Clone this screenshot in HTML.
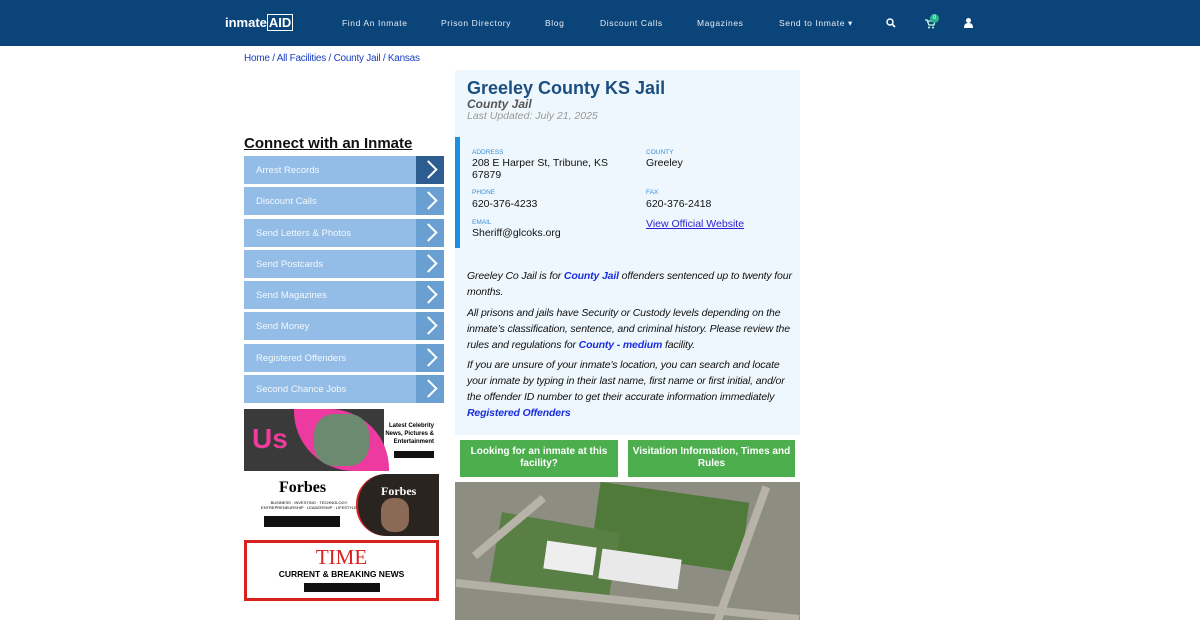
<!DOCTYPE html>
<html><head><meta charset="utf-8"><style>
*{margin:0;padding:0;box-sizing:border-box}
body{width:1200px;height:620px;overflow:hidden;background:#fff;font-family:"Liberation Sans",sans-serif;position:relative}
.nav{position:absolute;left:0;top:0;width:1200px;height:46px;background:#0b4479}
.nav span{position:absolute;top:18px;color:#e4ecf4;font-size:8.5px;letter-spacing:.6px}
.logo{position:absolute;left:225px;top:15px;color:#fff;font-weight:bold;font-size:13px}
.bc{position:absolute;left:244px;top:53px;font-size:10px;color:#1a3fc4;letter-spacing:-0.25px}
.ch{position:absolute;left:244px;top:135px;font-size:15px;font-weight:bold;text-decoration:underline;color:#111}
.btn{position:absolute;left:244px;width:200px;height:28px;background:#93bde6;color:#f4f8fc;font-size:9.5px;padding:9px 0 0 12px}
.btn i{position:absolute;right:0;top:0;width:28px;height:28px;background:#6a9fd2}
.btn i:after{content:"";position:absolute;left:6px;top:7px;width:11px;height:11px;border-right:2px solid #fff;border-top:2px solid #fff;transform:rotate(45deg)}
.panel{position:absolute;left:455px;top:70px;width:345px;height:365px;background:#eef7fd}
.lbl{position:absolute;font-size:6.5px;color:#3a8ed8}
.val{position:absolute;font-size:10.5px;color:#111;line-height:12px}
.p{position:absolute;left:12px;width:326px;font-size:10.5px;font-style:italic;line-height:16px;color:#111;letter-spacing:-0.15px}
.p b{color:#1a2ee0}
.g{position:absolute;top:440px;height:37px;background:#4cae4c;color:#fff;font-weight:bold;font-size:10px;text-align:center;line-height:12px;padding-top:6px}
</style></head><body>
<div class="nav">
<div class="logo">inmate<span style="position:static;font-size:13px;color:#fff;letter-spacing:0;font-weight:bold;border:1px solid #fff;padding:0 1px">AID</span></div>
<span style="left:342px">Find An Inmate</span>
<span style="left:441px">Prison Directory</span>
<span style="left:545px">Blog</span>
<span style="left:600px">Discount Calls</span>
<span style="left:697px">Magazines</span>
<span style="left:779px">Send to Inmate ▾</span>
<svg style="position:absolute;left:886px;top:18px" width="10" height="10"><circle cx="4" cy="4" r="3" fill="none" stroke="#fff" stroke-width="1.5"/><line x1="6" y1="6" x2="9" y2="9" stroke="#fff" stroke-width="1.6"/></svg>
<svg style="position:absolute;left:925px;top:19px" width="10" height="10"><path d="M0 1h2l2 5h5l1-4H3" fill="none" stroke="#cfe" stroke-width="1.3"/><circle cx="4" cy="8.5" r="1" fill="#cfe"/><circle cx="8" cy="8.5" r="1" fill="#cfe"/></svg>
<div style="position:absolute;left:930px;top:14px;width:9px;height:9px;border-radius:50%;background:#2bb58f;color:#fff;font-size:6px;text-align:center;line-height:9px">0</div>
<svg style="position:absolute;left:964px;top:18px" width="9" height="10"><circle cx="4.5" cy="2.5" r="2.5" fill="#fff"/><path d="M0 10c0-4 2-5 4.5-5s4.5 1 4.5 5z" fill="#fff"/></svg>
</div>
<div class="bc">Home / All Facilities / County Jail / Kansas</div>
<div class="ch">Connect with an Inmate</div>
<div class="btn" style="top:156px">Arrest Records<i style="background:#2d5d90"></i></div>
<div class="btn" style="top:187px">Discount Calls<i></i></div>
<div class="btn" style="top:219px">Send Letters &amp; Photos<i></i></div>
<div class="btn" style="top:250px">Send Postcards<i></i></div>
<div class="btn" style="top:281px">Send Magazines<i></i></div>
<div class="btn" style="top:312px">Send Money<i></i></div>
<div class="btn" style="top:344px">Registered Offenders<i></i></div>
<div class="btn" style="top:375px">Second Chance Jobs<i></i></div>
<div style="position:absolute;left:244px;top:409px;width:195px;height:62px;background:#fff;overflow:hidden">
<div style="position:absolute;left:0;top:0;width:140px;height:62px;background:#3a3a3a"></div>
<div style="position:absolute;left:50px;top:0;width:95px;height:62px;background:#ec3aa0;border-radius:0 60px 0 60px"></div>
<div style="position:absolute;left:70px;top:5px;width:55px;height:52px;background:#6b8a70;border-radius:20px"></div>
<div style="position:absolute;left:8px;top:14px;color:#ef3b9c;font-weight:bold;font-size:28px">Us</div>
<div style="position:absolute;right:5px;top:13px;font-size:6px;font-weight:bold;text-align:right;line-height:8px">Latest Celebrity<br>News, Pictures &amp;<br>Entertainment</div>
<div style="position:absolute;left:150px;top:42px;width:40px;height:7px;background:#111"></div>
</div>
<div style="position:absolute;left:244px;top:474px;width:195px;height:62px;background:#fff;overflow:hidden">
<div style="position:absolute;left:35px;top:5px;font-family:'Liberation Serif',serif;font-weight:bold;font-size:16px">Forbes</div>
<div style="position:absolute;left:10px;top:26px;font-size:4px;line-height:5px;text-align:center;width:110px">BUSINESS · INVESTING · TECHNOLOGY<br>ENTREPRENEURSHIP · LEADERSHIP · LIFESTYLE</div>
<div style="position:absolute;left:20px;top:42px;width:76px;height:11px;background:#111"></div>
<div style="position:absolute;left:112px;top:0;width:83px;height:62px;background:#2a2420;border-radius:30px 0 0 30px;border-left:2px solid #d22"></div>
<div style="position:absolute;left:137px;top:10px;font-family:'Liberation Serif',serif;font-weight:bold;font-size:12px;color:#fff">Forbes</div>
<div style="position:absolute;left:137px;top:24px;width:28px;height:34px;background:#8a6a55;border-radius:12px"></div>
</div>
<div style="position:absolute;left:244px;top:540px;width:195px;height:61px;border:3px solid #d8211d;background:#fff;text-align:center">
<div style="font-family:'Liberation Serif',serif;color:#d8211d;font-size:21px;line-height:22px;margin-top:3px">TIME</div>
<div style="font-size:8.5px;font-weight:bold;margin-top:1px">CURRENT &amp; BREAKING NEWS</div>
<div style="width:76px;height:9px;background:#111;margin:4px auto 0"></div>
</div>
<div class="panel">
<div style="position:absolute;left:12px;top:8px;font-size:18px;font-weight:bold;color:#1c4f80">Greeley County KS Jail</div>
<div style="position:absolute;left:12px;top:27px;font-size:12px;font-weight:bold;font-style:italic;color:#555">County Jail</div>
<div style="position:absolute;left:12px;top:40px;font-size:10.5px;font-style:italic;color:#999">Last Updated: July 21, 2025</div>
<div style="position:absolute;left:0;top:67px;width:5px;height:111px;background:#1a8fe3"></div>
<div class="lbl" style="left:17px;top:79px">ADDRESS</div><div class="val" style="left:17px;top:87px">208 E Harper St, Tribune, KS<br>67879</div>
<div class="lbl" style="left:191px;top:79px">COUNTY</div><div class="val" style="left:191px;top:87px">Greeley</div>
<div class="lbl" style="left:17px;top:119px">PHONE</div><div class="val" style="left:17px;top:128px">620-376-4233</div>
<div class="lbl" style="left:191px;top:119px">FAX</div><div class="val" style="left:191px;top:128px">620-376-2418</div>
<div class="lbl" style="left:17px;top:149px">EMAIL</div><div class="val" style="left:17px;top:157px">Sheriff@glcoks.org</div>
<div class="val" style="left:191px;top:148px;color:#2a1fd0;text-decoration:underline">View Official Website</div>
<div class="p" style="top:198px">Greeley Co Jail is for <b>County Jail</b> offenders sentenced up to twenty four months.</div>
<div class="p" style="top:235px">All prisons and jails have Security or Custody levels depending on the inmate’s classification, sentence, and criminal history. Please review the rules and regulations for <b>County - medium</b> facility.</div>
<div class="p" style="top:287px">If you are unsure of your inmate's location, you can search and locate your inmate by typing in their last name, first name or first initial, and/or the offender ID number to get their accurate information immediately <b>Registered Offenders</b></div>
</div>
<div class="g" style="left:460px;width:158px">Looking for an inmate at this facility?</div>
<div class="g" style="left:628px;width:167px">Visitation Information, Times and Rules</div>
<div style="position:absolute;left:455px;top:482px;width:345px;height:138px;background:#8d8d82;overflow:hidden">
<div style="position:absolute;left:140px;top:10px;width:150px;height:70px;background:#4f7a3a;transform:rotate(8deg)"></div>
<div style="position:absolute;left:40px;top:40px;width:120px;height:70px;background:#5a7f45;transform:rotate(10deg)"></div>
<div style="position:absolute;left:90px;top:62px;width:50px;height:28px;background:#eee;transform:rotate(8deg)"></div>
<div style="position:absolute;left:145px;top:72px;width:80px;height:30px;background:#e9e9e9;transform:rotate(8deg)"></div>
<div style="position:absolute;left:0;top:115px;width:345px;height:8px;background:#b3b0a6;transform:rotate(6deg)"></div>
<div style="position:absolute;left:280px;top:0;width:8px;height:160px;background:#b8b3a8;transform:rotate(20deg)"></div>
<div style="position:absolute;left:50px;top:0;width:8px;height:90px;background:#b8b3a8;transform:rotate(50deg)"></div>
</div>
</body></html>
